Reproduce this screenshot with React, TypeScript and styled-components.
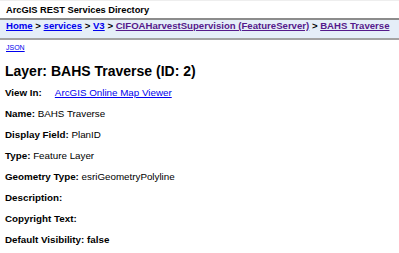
import styled, { createGlobalStyle } from 'styled-components';

const GlobalStyle = createGlobalStyle`
  html, body {
    margin: 0;
    padding: 0;
    background: #ffffff;
  }
  body {
    font-family: 'Liberation Sans', Arial, sans-serif;
    color: #000000;
  }
`;

const TitleBar = styled.div`
  border-top: 1px solid #eeeeee;
  height: 17px;
  line-height: 18px;
  padding-left: 6px;
  font-size: 9.3px;
  font-weight: bold;
`;

const Breadcrumbs = styled.div`
  border-top: 2px solid #8c8c8c;
  border-bottom: 2px solid #a3a3a3;
  background: #e5eef8;
  height: 18px;
  padding: 0 0 0 6px;
  line-height: 12px;
  font-size: 9.6px;
  font-weight: bold;
  white-space: nowrap;
`;

const Crumb = styled.a<{ $visited?: boolean }>`
  color: ${({ $visited }) => ($visited ? '#551a8b' : '#0000ee')};
  text-decoration: underline;
`;

const Content = styled.div`
  padding: 0 5px;
`;

const JsonRow = styled.div`
  margin-top: 3px;
  padding-left: 1px;
  font-size: 7px;
  line-height: 10px;
`;

const JsonLink = styled.a`
  color: #0000ee;
  text-decoration: underline;
`;

const Heading = styled.h2`
  margin: 9px 0 6px;
  font-size: 14px;
  line-height: 18px;
  font-weight: bold;
`;

const Fields = styled.div`
  display: flex;
  flex-direction: column;
  gap: 8px;
  font-size: 9.8px;
  line-height: 13px;
`;

const Field = styled.div``;

const Label = styled.b<{ $gap?: number }>`
  margin-right: ${({ $gap }) => $gap ?? 0}px;
`;

const MapLink = styled.a`
  color: #0000ee;
  text-decoration: underline;
`;

const fields: Array<[string, string]> = [
  ['Name:', 'BAHS Traverse'],
  ['Display Field:', 'PlanID'],
  ['Type:', 'Feature Layer'],
  ['Geometry Type:', 'esriGeometryPolyline'],
  ['Description:', ''],
  ['Copyright Text:', ''],
  ['Default Visibility: false', ''],
];

const App = () => {
  return (
    <>
      <GlobalStyle />
      <TitleBar>ArcGIS REST Services Directory</TitleBar>
      <Breadcrumbs>
        <Crumb href="#">Home</Crumb> &gt; <Crumb href="#">services</Crumb> &gt;{' '}
        <Crumb href="#">V3</Crumb> &gt;{' '}
        <Crumb href="#" $visited>
          CIFOAHarvestSupervision (FeatureServer)
        </Crumb>{' '}
        &gt;{' '}
        <Crumb href="#" $visited>
          BAHS Traverse
        </Crumb>
      </Breadcrumbs>
      <Content>
        <JsonRow>
          <JsonLink href="#">JSON</JsonLink>
        </JsonRow>
        <Heading>Layer: BAHS Traverse (ID: 2)</Heading>
        <Fields>
          <Field>
            <Label $gap={13}>View In:</Label>
            <MapLink href="#">ArcGIS Online Map Viewer</MapLink>
          </Field>
          {fields.map(([label, value]) => (
            <Field key={label}>
              <Label>{label}</Label> {value}
            </Field>
          ))}
        </Fields>
      </Content>
    </>
  );
};

export default App;
